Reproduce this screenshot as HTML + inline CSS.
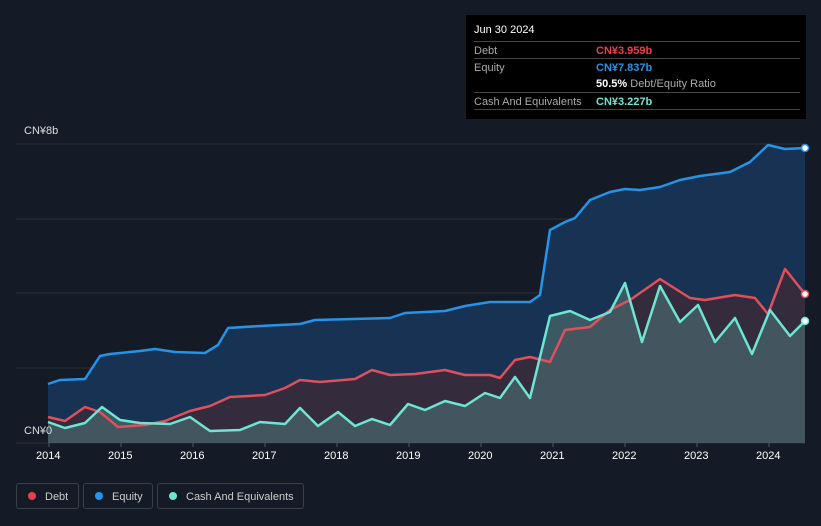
<!DOCTYPE html>
<html><head><style>
body{margin:0;background:#151b26;font-family:"Liberation Sans",sans-serif;width:821px;height:526px;overflow:hidden;position:relative}
.tt{position:absolute;left:466px;top:15px;width:340px;height:104px;background:#000;color:#fff;font-size:11px}
.row{position:absolute;left:8px;right:6px;border-top:1px solid #444;height:17px}
.lab{position:absolute;left:0;color:#aaa;top:3px}
.val{position:absolute;left:122px;top:3px;font-weight:bold}
.ax{position:absolute;color:#fff;font-size:11px;top:450px}
.leg{position:absolute;top:483px;height:26px;border:1px solid #3a404a;border-radius:3px;color:#ccc;font-size:11px;line-height:26px;box-sizing:border-box}
.dot{display:inline-block;width:8px;height:8px;border-radius:50%;margin:0 9px 0 11px;vertical-align:-0px}
</style></head><body>
<svg width="821" height="526" style="position:absolute;left:0;top:0">
<g stroke="#2a303b" stroke-width="1">
<line x1="16" x2="805" y1="144" y2="144"/><line x1="16" x2="805" y1="219" y2="219"/><line x1="16" x2="805" y1="293" y2="293"/><line x1="16" x2="805" y1="368" y2="368"/><line x1="16" x2="805" y1="443" y2="443"/>
</g>
<polygon fill="#173252" points="48,384 60,380 85,379 100,356 110,354 140,351 155,349 175,352 205,353 218,345 228,328 260,326 300,324 315,320 390,318 405,313 445,311 465,306 490,302 530,302 540,295 550,230 565,222 575,218 590,200 610,192 625,189 640,190 660,187 680,180 700,176 730,172 750,162 768,145 785,149 805,148 805,443 48,443"/>
<polygon fill="#3a2a3a" opacity="0.85" points="48,417 65,421 85,407 100,412 118,427 145,425 165,421 190,411 210,406 230,397 265,395 285,388 300,380 320,382 355,379 372,370 390,375 415,374 445,370 465,375 490,375 500,378 515,360 530,357 550,362 565,330 590,327 610,310 630,300 660,279 690,298 705,300 735,295 755,298 768,314 785,269 805,294 805,443 48,443"/>
<polygon fill="#4a6a6e" opacity="0.7" points="48,422 65,428 85,423 102,407 120,420 140,423 170,424 190,417 210,431 240,430 260,422 285,424 300,408 318,426 338,412 355,426 372,419 390,425 408,404 425,410 445,401 465,406 485,393 500,398 515,377 530,398 550,316 570,311 590,320 610,312 625,283 642,342 660,286 680,322 698,305 715,342 735,318 752,354 770,310 790,336 805,321 805,443 48,443"/>
<g fill="none" stroke-width="2.5" stroke-linejoin="round">
<polyline stroke="#2394e8" points="48,384 60,380 85,379 100,356 110,354 140,351 155,349 175,352 205,353 218,345 228,328 260,326 300,324 315,320 390,318 405,313 445,311 465,306 490,302 530,302 540,295 550,230 565,222 575,218 590,200 610,192 625,189 640,190 660,187 680,180 700,176 730,172 750,162 768,145 785,149 805,148"/>
<polyline stroke="#e0505c" points="48,417 65,421 85,407 100,412 118,427 145,425 165,421 190,411 210,406 230,397 265,395 285,388 300,380 320,382 355,379 372,370 390,375 415,374 445,370 465,375 490,375 500,378 515,360 530,357 550,362 565,330 590,327 610,310 630,300 660,279 690,298 705,300 735,295 755,298 768,314 785,269 805,294"/>
<polyline stroke="#6ee5d3" points="48,422 65,428 85,423 102,407 120,420 140,423 170,424 190,417 210,431 240,430 260,422 285,424 300,408 318,426 338,412 355,426 372,419 390,425 408,404 425,410 445,401 465,406 485,393 500,398 515,377 530,398 550,316 570,311 590,320 610,312 625,283 642,342 660,286 680,322 698,305 715,342 735,318 752,354 770,310 790,336 805,321"/>
</g>
<circle cx="805" cy="148" r="3.5" fill="#fff" stroke="#2394e8" stroke-width="1.5"/>
<circle cx="805" cy="294" r="3.5" fill="#fff" stroke="#e0505c" stroke-width="1.5"/>
<circle cx="805" cy="321" r="3.5" fill="#fff" stroke="#6ee5d3" stroke-width="1.5"/>
<g stroke="#555" stroke-width="1"><line x1="49" x2="49" y1="443" y2="447"/><line x1="121" x2="121" y1="443" y2="447"/><line x1="193" x2="193" y1="443" y2="447"/><line x1="265" x2="265" y1="443" y2="447"/><line x1="337" x2="337" y1="443" y2="447"/><line x1="409" x2="409" y1="443" y2="447"/><line x1="481" x2="481" y1="443" y2="447"/><line x1="553" x2="553" y1="443" y2="447"/><line x1="625" x2="625" y1="443" y2="447"/><line x1="697" x2="697" y1="443" y2="447"/><line x1="769" x2="769" y1="443" y2="447"/></g>
</svg>
<div style="position:absolute;left:24px;top:125px;color:#ddd;font-size:11px">CN¥8b</div>
<div style="position:absolute;left:24px;top:425px;color:#ddd;font-size:11px">CN¥0</div>
<div class="ax" style="left:36px">2014</div><div class="ax" style="left:108px">2015</div><div class="ax" style="left:180px">2016</div><div class="ax" style="left:252px">2017</div><div class="ax" style="left:324px">2018</div><div class="ax" style="left:396px">2019</div><div class="ax" style="left:468px">2020</div><div class="ax" style="left:540px">2021</div><div class="ax" style="left:612px">2022</div><div class="ax" style="left:684px">2023</div><div class="ax" style="left:756px">2024</div>
<div class="tt">
<div style="position:absolute;left:8px;top:9px;font-size:11px">Jun 30 2024</div>
<div class="row" style="top:26px"><span class="lab">Debt</span><span class="val" style="color:#e8404c">CN¥3.959b</span></div>
<div class="row" style="top:43px"><span class="lab">Equity</span><span class="val" style="color:#2394e8">CN¥7.837b</span></div>
<div class="row" style="top:60px;border-top:none"><span class="val" style="color:#fff">50.5% <span style="color:#aaa;font-weight:normal">Debt/Equity Ratio</span></span></div>
<div class="row" style="top:77px"><span class="lab">Cash And Equivalents</span><span class="val" style="color:#6ee5d3">CN¥3.227b</span></div>
<div class="row" style="top:94px;height:0"></div>
</div>
<div class="leg" style="left:16px;width:63px"><span class="dot" style="background:#e8404c"></span>Debt</div>
<div class="leg" style="left:83px;width:70px"><span class="dot" style="background:#2394e8"></span>Equity</div>
<div class="leg" style="left:157px;width:147px"><span class="dot" style="background:#6ee5d3"></span>Cash And Equivalents</div>
</body></html>
